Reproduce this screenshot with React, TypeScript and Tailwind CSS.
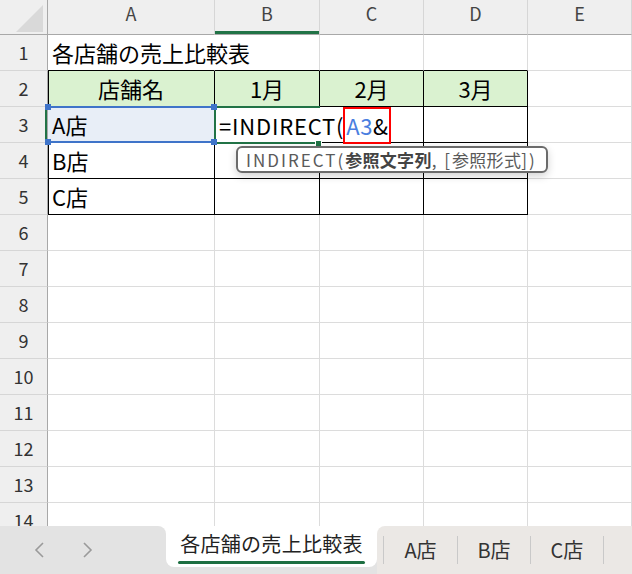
import React from 'react';
import clsx from 'clsx';

type CellProps = {
  rk?: boolean;
  bk?: boolean;
  rn?: boolean;
  lk?: boolean;
  fill?: boolean;
  center?: boolean;
  extra?: string;
  children?: React.ReactNode;
};

const Cell = ({ rk, bk, rn, lk, fill, center, extra, children }: CellProps) => (
  <div
    className={clsx(
      'relative h-[36px] border-r border-b flex items-center whitespace-nowrap text-[22px] text-black',
      rn ? 'border-r-transparent' : rk ? 'border-r-black' : 'border-r-[#dcdcdc]',
      bk ? 'border-b-black' : 'border-b-[#dcdcdc]',
      lk && 'shadow-[inset_1px_0_0_#000]',
      fill && 'bg-[#daf2d0]',
      center ? 'justify-center' : 'pl-[4px]',
      extra
    )}
  >
    {children}
  </div>
);

const RowHead = ({ n, active }: { n: number; active?: boolean }) => (
  <div
    className={clsx(
      'h-[36px] bg-[#efefef] border-b border-b-[#d6d6d6] border-r border-r-[#a8a8a8] flex items-center justify-center text-[18px] text-[#333]',
      active && 'shadow-[inset_-2px_0_0_#217346]'
    )}
  >
    {n}
  </div>
);

const ColHead = ({ label, active }: { label: string; active?: boolean }) => (
  <div
    className={clsx(
      'h-[35px] bg-[#efefef] border-b border-b-[#a8a8a8] border-r border-r-[#d6d6d6] flex justify-center pt-[1px] leading-[24px] text-[18px] text-[#444]',
      active && 'shadow-[inset_0_-3px_0_#217346]'
    )}
  >
    {label}
  </div>
);

const Corner = ({ pos }: { pos: string }) => (
  <div className={clsx('absolute w-[6px] h-[6px] bg-[#3f74c9] z-30', pos)} />
);

const emptyRows = [6, 7, 8, 9, 10, 11, 12, 13, 14];

export default function App() {
  return (
    <div className="w-[632px] h-[574px] flex flex-col bg-white overflow-hidden font-['Noto_Sans_CJK_JP','Noto_Sans',sans-serif]">
      {/* sheet grid */}
      <div className="flex-1 overflow-hidden">
        <div className="grid grid-cols-[48px_167px_105px_104px_104px_104px]">
          {/* header row */}
          <div className="relative h-[35px] bg-[#efefef] border-b border-b-[#a8a8a8] border-r border-r-[#a8a8a8]">
            <svg className="absolute left-0 top-0" width="47" height="34" viewBox="0 0 47 34">
              <polygon points="16,32 43,32 43,5" fill="#d9d9d9" />
            </svg>
          </div>
          <ColHead label="A" />
          <ColHead label="B" active />
          <ColHead label="C" />
          <ColHead label="D" />
          <ColHead label="E" />

          {/* row 1 */}
          <RowHead n={1} />
          <Cell rn bk>各店舗の売上比較表</Cell>
          <Cell bk />
          <Cell bk />
          <Cell bk />
          <Cell />

          {/* row 2 */}
          <RowHead n={2} />
          <Cell rk bk lk fill center>店舗名</Cell>
          <Cell rk bk fill center>1月</Cell>
          <Cell rk bk fill center>2月</Cell>
          <Cell rk bk fill center>3月</Cell>
          <Cell />

          {/* row 3 */}
          <RowHead n={3} active />
          <Cell rk bk extra="bg-[#e8eef7]">
            A店
            <div className="absolute left-[-1px] top-[-1px] w-[167px] h-[2px] bg-[#3f74c9] z-20" />
            <div className="absolute left-[-1px] bottom-[-1px] w-[167px] h-[2px] bg-[#3f74c9] z-20" />
            <Corner pos="left-[-3px] top-[-3px]" />
            <Corner pos="right-[-3px] top-[-3px]" />
            <Corner pos="left-[-3px] bottom-[-3px]" />
            <Corner pos="right-[-3px] bottom-[-3px]" />
          </Cell>
          <Cell rn bk>
            <div className="absolute left-[-1px] top-[-1px] w-[106px] h-[38px] border-2 border-r-0 border-[#217346] z-10" />
            <div className="absolute left-[100px] top-[33px] w-[7px] h-[7px] bg-[#217346] border border-white z-10" />
            <div className="absolute left-[4px] top-[-1px] h-[38px] flex items-center z-20 text-black tracking-[0.8px]">
              =INDIRECT(
              <span className="inline-flex items-center h-[37px] border-2 border-[#ff0000] px-[1px] -ml-[1px] tracking-[0.5px]">
                <span className="text-[#4a7ee0]">A3</span>&amp;
              </span>
            </div>
            <div className="absolute left-[21px] top-[39px] w-[312px] h-[27px] z-40 bg-white border-2 border-[#6b6b6b] rounded-[6px] shadow-[0_3px_8px_rgba(0,0,0,0.18)] flex items-center pl-[8px] text-[17px] text-[#5a5a5a]">
              <span className="tracking-[2px]">INDIRECT(</span>
              <span className="font-bold text-[#444] tracking-[0.3px]">参照文字列</span>
              <span className="tracking-[2px]">, [</span>
              <span className="tracking-[0.3px]">参照形式</span>
              <span className="tracking-[2px]">])</span>
            </div>
          </Cell>
          <Cell rk bk />
          <Cell rk bk />
          <Cell />

          {/* row 4 */}
          <RowHead n={4} />
          <Cell rk bk lk>B店</Cell>
          <Cell rk bk />
          <Cell rk bk />
          <Cell rk bk />
          <Cell />

          {/* row 5 */}
          <RowHead n={5} />
          <Cell rk bk lk>C店</Cell>
          <Cell rk bk />
          <Cell rk bk />
          <Cell rk bk />
          <Cell />

          {emptyRows.map((n) => (
            <React.Fragment key={n}>
              <RowHead n={n} />
              <Cell />
              <Cell />
              <Cell />
              <Cell />
              <Cell />
            </React.Fragment>
          ))}
        </div>
      </div>

      {/* sheet tabs */}
      <div className="h-[48px] flex bg-white shrink-0">
        <div className="w-[166px] bg-[#e3e3e3] rounded-tr-[8px] flex items-center">
          <svg className="ml-[34px]" width="11" height="16" viewBox="0 0 11 16">
            <polyline points="9,1 2,8 9,15" fill="none" stroke="#9a9a9a" strokeWidth="1.6" />
          </svg>
          <svg className="ml-[37px]" width="11" height="16" viewBox="0 0 11 16">
            <polyline points="2,1 9,8 2,15" fill="none" stroke="#9a9a9a" strokeWidth="1.6" />
          </svg>
        </div>
        <div className="w-[211px] bg-[#e3e3e3]">
          <div className="h-[41px] bg-white rounded-b-[8px] flex flex-col items-center justify-center">
            <div className="text-[20px] leading-[26px] text-[#222] pt-[2px] tracking-[0.3px]">各店舗の売上比較表</div>
            <div className="w-[187px] h-[3px] bg-[#1d6f42] rounded-full mt-[4px]" />
          </div>
        </div>
        <div className="flex-1 bg-[#ebe8e5] rounded-tl-[8px] flex items-center pl-[6px]">
          <div className="w-px h-[28px] bg-[#c9c9c9]" />
          <div className="w-[73px] text-center text-[20px] text-[#333]">A店</div>
          <div className="w-px h-[28px] bg-[#c9c9c9]" />
          <div className="w-[72px] text-center text-[20px] text-[#333]">B店</div>
          <div className="w-px h-[28px] bg-[#c9c9c9]" />
          <div className="w-[72px] text-center text-[20px] text-[#333]">C店</div>
          <div className="w-px h-[28px] bg-[#c9c9c9]" />
        </div>
      </div>
    </div>
  );
}
